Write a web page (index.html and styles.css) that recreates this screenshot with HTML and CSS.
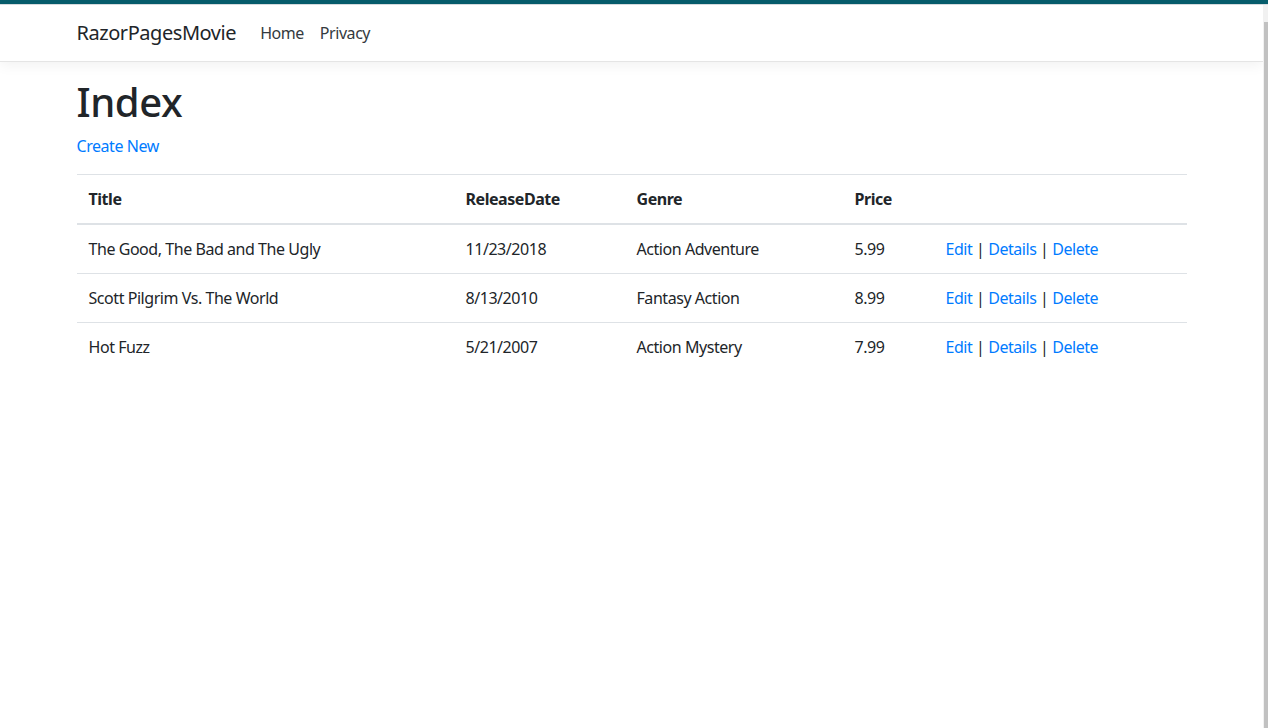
FILE: index.html
```html
<!DOCTYPE html>
<html lang="en">
<head>
<meta charset="utf-8">
<title>Index - RazorPagesMovie</title>
<link rel="stylesheet" href="styles.css">
</head>
<body>
<div class="topbar"></div>
<div class="frame">
  <div class="page">
    <header class="navbar">
      <div class="container nav-inner">
        <a class="brand" href="#">RazorPagesMovie</a>
        <ul class="nav">
          <li><a class="nav-link" href="#">Home</a></li>
          <li><a class="nav-link" href="#">Privacy</a></li>
        </ul>
      </div>
    </header>
    <main class="container">
      <h1>Index</h1>
      <p class="create"><a href="#">Create New</a></p>
      <table class="table">
        <thead>
          <tr>
            <th class="c-title">Title</th>
            <th class="c-date">ReleaseDate</th>
            <th class="c-genre">Genre</th>
            <th class="c-price">Price</th>
            <th class="c-act"></th>
          </tr>
        </thead>
        <tbody>
          <tr>
            <td>The Good, The Bad and The Ugly</td>
            <td>11/23/2018</td>
            <td>Action Adventure</td>
            <td>5.99</td>
            <td><a href="#">Edit</a> | <a href="#">Details</a> | <a href="#">Delete</a></td>
          </tr>
          <tr>
            <td>Scott Pilgrim Vs. The World</td>
            <td>8/13/2010</td>
            <td>Fantasy Action</td>
            <td>8.99</td>
            <td><a href="#">Edit</a> | <a href="#">Details</a> | <a href="#">Delete</a></td>
          </tr>
          <tr>
            <td>Hot Fuzz</td>
            <td>5/21/2007</td>
            <td>Action Mystery</td>
            <td>7.99</td>
            <td><a href="#">Edit</a> | <a href="#">Details</a> | <a href="#">Delete</a></td>
          </tr>
        </tbody>
      </table>
    </main>
  </div>
  <div class="scrollbar"><div class="thumb"></div></div>
</div>
</body>
</html>
```

FILE: styles.css
```css
* { box-sizing: border-box; }
html, body { margin: 0; padding: 0; height: 100%; overflow: hidden; }
body {
  font-family: "Noto Sans", "Open Sans", sans-serif;
  font-size: 16px;
  line-height: 1.5;
  letter-spacing: -0.028em;
  color: #212529;
  background: #fff;
  display: flex;
  flex-direction: column;
}
a { color: #007bff; text-decoration: none; }

.topbar {
  height: 5px;
  background: #075d6c;
  border-bottom: 1px solid #d9dde0;
  flex: none;
}
.frame { flex: 1; display: flex; min-height: 0; }
.page { flex: 1; min-width: 0; }
.scrollbar {
  width: 5px;
  background: #f1f1f1;
  padding-top: 17px;
  display: flex;
  flex-direction: column;
}
.thumb { flex: 1; background: #c1c1c1; margin-left: 1px; }

.container {
  max-width: 1140px;
  margin: 0 auto;
  padding: 0 15px;
}

.navbar {
  background: #fff;
  padding: 8px 16px;
  border-bottom: 1px solid #e5e5e5;
  box-shadow: 0 4px 12px rgba(0, 0, 0, 0.05);
  margin-bottom: 16px;
}
.nav-inner { display: flex; align-items: center; }
.brand {
  font-size: 20px;
  line-height: 30px;
  padding: 5px 0;
  margin-right: 16px;
  color: #212529;
}
.nav { display: flex; list-style: none; margin: 0; padding: 0; }
.nav-link { display: block; padding: 8px; color: #343a40; }

h1 {
  font-size: 40px;
  font-weight: 500;
  line-height: 1.2;
  margin: 0 0 8px;
}
.create { margin: 0 0 16px; }

.table {
  width: 100%;
  border-collapse: collapse;
  color: #212529;
}
.table th, .table td {
  padding: 12px;
  text-align: left;
  vertical-align: top;
  border-top: 1px solid #dee2e6;
}
.table thead th {
  font-weight: 700;
  border-bottom: 2px solid #dee2e6;
}
.c-title { width: 377px; }
.c-date { width: 171px; }
.c-genre { width: 218px; }
.c-price { width: 91px; }
```
